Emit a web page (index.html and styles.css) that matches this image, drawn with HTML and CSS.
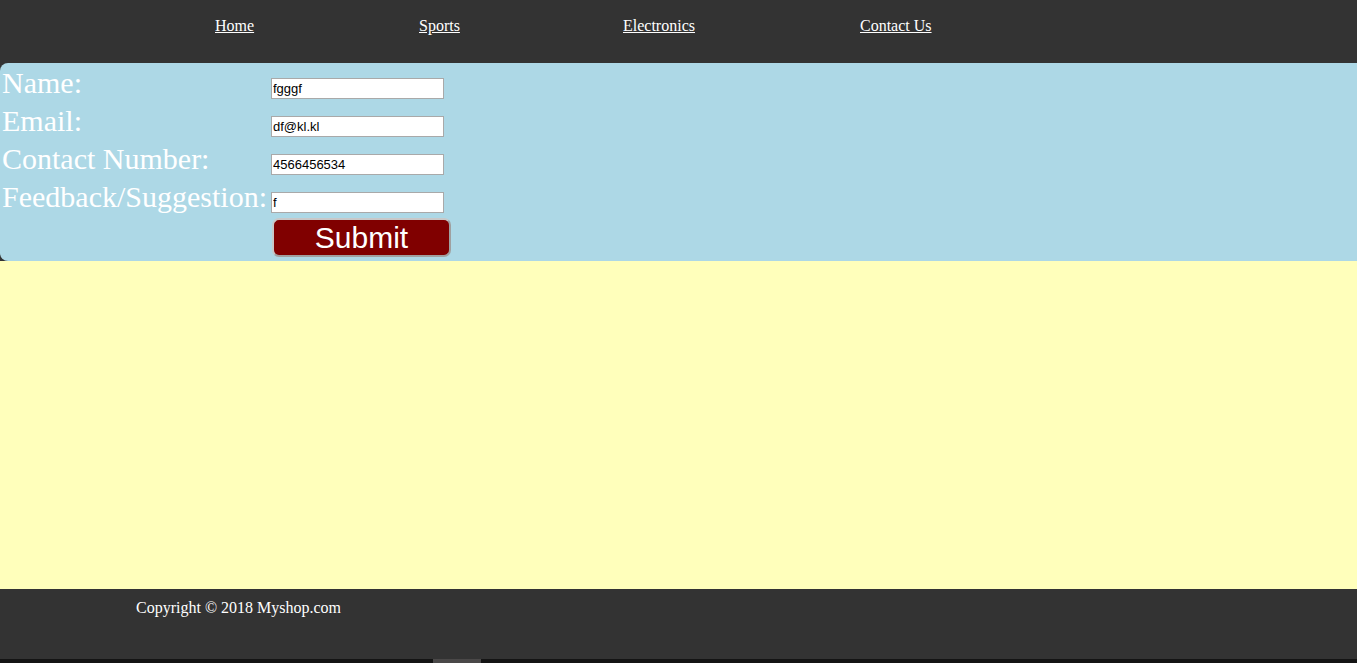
FILE: index.html
```html
<!DOCTYPE html>
<html>
<head>
<meta charset="utf-8">
<title>Myshop - Contact Us</title>
<link rel="stylesheet" href="styles.css">
</head>
<body>
<div class="page">
  <header class="header">
    <nav class="nav">
      <span class="nav-item"><a href="#">Home</a></span>
      <span class="nav-item"><a href="#">Sports</a></span>
      <span class="nav-item wide"><a href="#">Electronics</a></span>
      <span class="nav-item"><a href="#">Contact Us</a></span>
    </nav>
  </header>
  <form class="form">
    <div class="row"><span class="label">Name:</span><input class="field" type="text" value="fgggf"></div>
    <div class="row"><span class="label">Email:</span><input class="field" type="text" value="df@kl.kl"></div>
    <div class="row"><span class="label">Contact Number:</span><input class="field" type="text" value="4566456534"></div>
    <div class="row"><span class="label">Feedback/Suggestion:</span><input class="field" type="text" value="f"></div>
    <div class="row submit-row"><span class="label"></span><button class="submit" type="button">Submit</button></div>
  </form>
  <main class="content"></main>
  <footer class="footer">
    <p class="copy">Copyright © 2018 Myshop.com</p>
  </footer>
  <div class="strip"><span class="strip-tab"></span></div>
</div>
</body>
</html>
```
FILE: styles.css
```css
html, body {
  margin: 0;
  padding: 0;
  background: #333333;
}
body {
  font-family: "Liberation Serif", "Times New Roman", serif;
  overflow: hidden;
}
.page {
  width: 1357px;
  height: 663px;
  display: flex;
  flex-direction: column;
}
.header {
  height: 63px;
  background: #333333;
  box-sizing: border-box;
  padding: 17px 0 0 215px;
}
.nav {
  display: flex;
  font-size: 16px;
  line-height: 18px;
}
.nav-item {
  width: 204px;
  flex: none;
}
.nav-item.wide {
  width: 237px;
}
.nav a {
  color: #ffffff;
  text-decoration: underline;
}
.form {
  margin: 0;
  height: 198px;
  box-sizing: border-box;
  background: #add8e6;
  border-radius: 8px 0 0 8px;
  padding: 1px 0 0 2px;
}
.row {
  display: flex;
  align-items: baseline;
  height: 38px;
}
.label {
  width: 269px;
  flex: none;
  font-size: 30px;
  line-height: 38px;
  color: #ffffff;
  white-space: nowrap;
}
.field {
  width: 173px;
  height: 21px;
  box-sizing: border-box;
  margin: 0;
  padding: 1px 1px;
  border: 1px solid #a9a9a9;
  background: #ffffff;
  font-family: "Liberation Sans", Arial, sans-serif;
  font-size: 13px;
  color: #000000;
}
.submit-row {
  align-items: flex-start;
}
.submit {
  margin: 2px 0 0 1px;
  width: 179px;
  height: 39px;
  box-sizing: border-box;
  background: #800000;
  border: 2px solid #a0a0a0;
  border-top-color: #c8c8c8;
  border-left-color: #c8c8c8;
  border-radius: 7px;
  color: #ffffff;
  font-family: "Liberation Sans", Arial, sans-serif;
  font-size: 30px;
  line-height: 33px;
  padding: 0;
}
.content {
  height: 328px;
  background: #ffffbb;
}
.footer {
  height: 70px;
  background: #333333;
  box-sizing: border-box;
  padding: 10px 0 0 136px;
}
.copy {
  margin: 0;
  color: #ffffff;
  font-size: 16px;
  line-height: 18px;
}
.strip {
  height: 4px;
  background: #141414;
  padding-left: 433px;
}
.strip-tab {
  display: block;
  width: 48px;
  height: 4px;
  background: #4a4848;
}
```
